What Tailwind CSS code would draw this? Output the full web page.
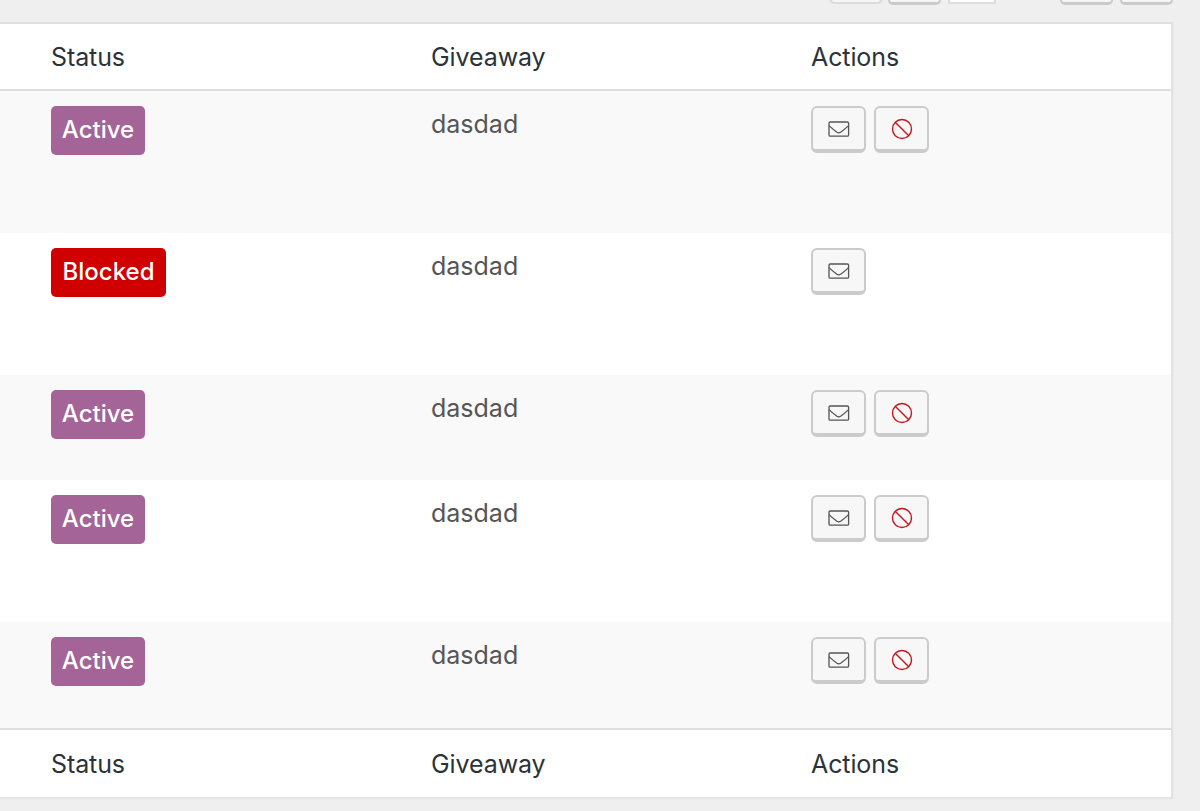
<!DOCTYPE html>
<html lang="en"><head><meta charset="utf-8"><title>Entries</title>
<script src="https://cdn.jsdelivr.net/npm/@tailwindcss/browser@4"></script></head>
<body class="h-[811px] w-[1200px] overflow-hidden bg-[#efefef] font-['Inter',sans-serif] text-[25px] leading-[36px]">
<svg class="hidden">
<symbol id="mail" viewBox="0 0 22 16"><g fill="none" stroke="#555" stroke-width="1.3" stroke-linejoin="round"><rect x="1" y="1" width="19.6" height="14.2" rx="1.2"/><path d="M1 4.6Q5 8.4 9 11.2Q10.8 12.4 12.6 11.2Q16.6 8.4 20.6 4.6"/></g></symbol>
<symbol id="ban" viewBox="0 0 22 22"><g fill="none" stroke="#c4161c" stroke-width="1.4"><circle cx="11" cy="11" r="9.5"/><path d="M4.2 4.2L17.8 17.8"/></g></symbol>
</svg>
<div class="flex h-[22px] items-start pl-[830px]">
<div class="h-1 w-[52px] rounded-b-[5px] border-2 border-t-0 border-[#dcdcdc] bg-[#f5f5f5]"></div>
<div class="ml-1.5 h-[5px] w-[53px] rounded-b-[6px] border-2 border-t-0 border-b-3 border-[#cacaca] bg-[#f6f6f6]"></div>
<div class="ml-[7px] h-1 w-[48px] border-2 border-t-0 border-[#dcdcdc] bg-white"></div>
<div class="ml-16 h-[5px] w-[53px] rounded-b-[6px] border-2 border-t-0 border-b-3 border-[#cacaca] bg-[#f6f6f6]"></div>
<div class="ml-[7px] h-[5px] w-[53px] rounded-b-[6px] border-2 border-t-0 border-b-3 border-[#cacaca] bg-[#f6f6f6]"></div>
</div>
<main id="table" class="w-[1173px] border-r-2 border-b border-[#e2e2e2] bg-white shadow-[0_1px_2px_rgba(0,0,0,0.05)]"></main>
<script>
const heading = edge => `<div class="grid ${edge} grid-cols-[380px_380px_1fr] items-center border-[#dfdfdf] pl-[51px] text-[#2c3338]">
<div><span class="tracking-[-0.1px]">Status</span></div><div><span class="tracking-[-0.1px]">Giveaway</span></div><div><span class="tracking-[-0.1px]">Actions</span></div></div>`;
const button = (id, size) => `<div class="flex h-[47px] w-[55px] items-center justify-center rounded-[6px] border-2 border-b-4 border-[#cbcbcb] bg-[#f7f7f7]"><svg class="${size}"><use href="#${id}"/></svg></div>`;
const row = ([height, blocked, bg]) => `<div class="grid ${height} ${bg} grid-cols-[380px_380px_1fr] items-start pl-[51px] pt-[15px] text-[#555]">
<div class="${blocked ? 'w-[115px] bg-[#d00000]' : 'w-[94px] bg-[#a46497]'} flex h-[49px] justify-center rounded-[5px] pt-[6px] text-white"><span class="text-[24px] font-medium">${blocked ? 'Blocked' : 'Active'}</span></div>
<div><span>dasdad</span></div>
<div class="flex gap-[8px]">${button('mail', 'h-4 w-[22px]')}${blocked ? '' : button('ban', 'h-[22px] w-[22px]')}</div></div>`;
document.getElementById('table').innerHTML = heading('h-[69px] border-t-2 border-b-2') + [
['h-[142px]', false, 'bg-[#f9f9f9]'],
['h-[142px]', true, 'bg-white'],
['h-[105px]', false, 'bg-[#f9f9f9]'],
['h-[142px]', false, 'bg-white'],
['h-[106px]', false, 'bg-[#f9f9f9]']].map(row).join('') + heading('h-[69px] border-t-2');
</script>
</body></html>
